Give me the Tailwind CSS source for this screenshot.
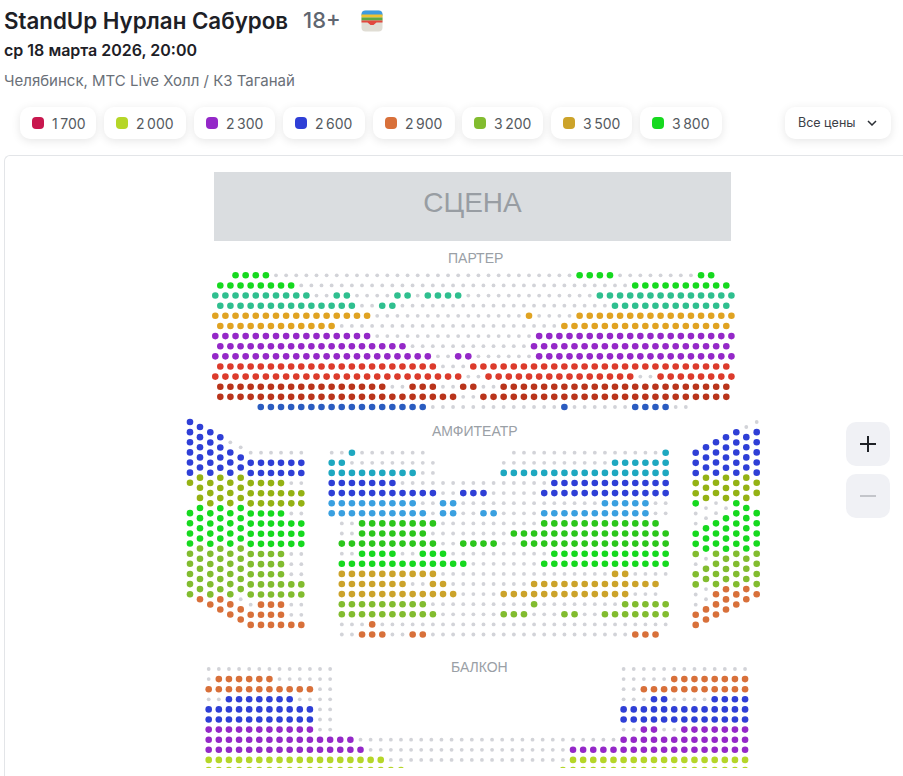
<!DOCTYPE html>
<html lang="ru">
<head>
    <meta charset="UTF-8">
    <title>StandUp Нурлан Сабуров</title>
    <meta name="viewport" content="width=device-width, initial-scale=1.0">
    <script src="https://cdn.jsdelivr.net/npm/@tailwindcss/browser@4"></script>
</head>
<body class="h-[776px] overflow-hidden bg-white font-['Inter',sans-serif]">

<header class="pl-1 pt-[7px]">
    <div class="flex items-center h-[27px]">
        <h1 class="text-[22.3px] font-semibold text-[#1d2026] leading-[27px]">StandUp Нурлан Сабуров</h1>
        <span class="ml-[15px] text-[22px] font-medium text-[#5f6670] leading-[27px]">18+</span>
        <svg class="ml-[20px]" width="22" height="22" viewBox="0 0 22 22">
            <rect x="0.5" y="0.5" width="21" height="21" rx="4" fill="#e0ddd4"/>
            <path d="M0.5 4.5a4 4 0 0 1 4-4h13a4 4 0 0 1 4 4v1h-21z" fill="#3d9be0"/>
            <rect x="0.5" y="4.5" width="21" height="3" fill="#f2c230"/>
            <rect x="0.5" y="7.5" width="21" height="3" fill="#5ea845"/>
            <path d="M0.5 10.5h21v2h-6l-3 2.500h-3l-3-2.500h-6z" fill="#e2483f"/>
        </svg>
    </div>
    <p class="mt-[6px] text-[16px] font-semibold text-[#1d2026] leading-[20px]">ср 18 марта 2026, 20:00</p>
    <p class="mt-[11px] text-[15px] text-[#6a7078] leading-[20px]">Челябинск, МТС Live Холл / КЗ Таганай</p>
</header>

<div class="flex items-center mt-[16px] pl-[20px] pr-3 h-[32px]">
    <div class="flex gap-2">
        <div class="flex items-center h-8 w-[76px] pl-3 rounded-[10px] bg-white shadow-[0_2px_10px_rgba(0,0,0,0.1)] text-[14px] text-[#555a60]"><i class="w-3 h-3 rounded-[4px] bg-[#c8174e] mr-[8px]"></i><span class="pt-px">1&#8201;700</span></div>
        <div class="flex items-center h-8 w-[82px] pl-3 rounded-[10px] bg-white shadow-[0_2px_10px_rgba(0,0,0,0.1)] text-[14px] text-[#555a60]"><i class="w-3 h-3 rounded-[4px] bg-[#b5d628] mr-[8px]"></i><span class="pt-px">2&#8201;000</span></div>
        <div class="flex items-center h-8 w-[81px] pl-3 rounded-[10px] bg-white shadow-[0_2px_10px_rgba(0,0,0,0.1)] text-[14px] text-[#555a60]"><i class="w-3 h-3 rounded-[4px] bg-[#9428c8] mr-[8px]"></i><span class="pt-px">2&#8201;300</span></div>
        <div class="flex items-center h-8 w-[82px] pl-3 rounded-[10px] bg-white shadow-[0_2px_10px_rgba(0,0,0,0.1)] text-[14px] text-[#555a60]"><i class="w-3 h-3 rounded-[4px] bg-[#2f3fd6] mr-[8px]"></i><span class="pt-px">2&#8201;600</span></div>
        <div class="flex items-center h-8 w-[82px] pl-3 rounded-[10px] bg-white shadow-[0_2px_10px_rgba(0,0,0,0.1)] text-[14px] text-[#555a60]"><i class="w-3 h-3 rounded-[4px] bg-[#d8703a] mr-[8px]"></i><span class="pt-px">2&#8201;900</span></div>
        <div class="flex items-center h-8 w-[81px] -ml-px pl-3 rounded-[10px] bg-white shadow-[0_2px_10px_rgba(0,0,0,0.1)] text-[14px] text-[#555a60]"><i class="w-3 h-3 rounded-[4px] bg-[#82bc2f] mr-[8px]"></i><span class="pt-px">3&#8201;200</span></div>
        <div class="flex items-center h-8 w-[81px] pl-3 rounded-[10px] bg-white shadow-[0_2px_10px_rgba(0,0,0,0.1)] text-[14px] text-[#555a60]"><i class="w-3 h-3 rounded-[4px] bg-[#cca32a] mr-[8px]"></i><span class="pt-px">3&#8201;500</span></div>
        <div class="flex items-center h-8 w-[82px] pl-3 rounded-[10px] bg-white shadow-[0_2px_10px_rgba(0,0,0,0.1)] text-[14px] text-[#555a60]"><i class="w-3 h-3 rounded-[4px] bg-[#16d91f] mr-[8px]"></i><span class="pt-px">3&#8201;800</span></div>
    </div>
    <button class="ml-auto flex items-center justify-between h-8 w-[106px] pl-[13px] pr-[14px] rounded-[10px] bg-white shadow-[0_2px_10px_rgba(0,0,0,0.1)] text-[12.5px] text-[#3b4046]">
        Все цены
        <svg width="10" height="6" viewBox="0 0 10 6" fill="none" stroke="#2b2f35" stroke-width="1.5"><path d="M1 1l4 4 4-4"/></svg>
    </button>
</div>

<!-- seat map, x/y of everything inside is page coords minus 5/156 -->
<main class="relative mt-4 ml-1 h-[621px] border-t border-l border-[#e3e5e8] rounded-tl-[6px]">
    <div class="absolute left-[209px] top-[16px] flex items-center justify-center w-[517px] h-[69px] pb-2 bg-[#dadde0] font-['Liberation_Sans',sans-serif] text-[28px] text-[#989da3]">СЦЕНА</div>
    <div class="absolute left-[443px] top-[94px] font-['Liberation_Sans',sans-serif] text-[14px] leading-[16px] text-[#9aa0a6]">ПАРТЕР</div>
    <div class="absolute left-[427px] top-[267px] font-['Liberation_Sans',sans-serif] text-[14px] leading-[16px] text-[#9aa0a6]">АМФИТЕАТР</div>
    <div class="absolute left-[446px] top-[503px] font-['Liberation_Sans',sans-serif] text-[14px] leading-[16px] text-[#9aa0a6]">БАЛКОН</div>

    <svg id="seats" class="absolute left-[-5px] top-[-156px]" width="898" height="768"></svg>

    <div class="absolute left-[841px] top-[266px] flex flex-col gap-2">
        <button class="flex items-center justify-center w-11 h-11 rounded-[10px] bg-[#f0f1f5]">
            <svg width="18" height="18" viewBox="0 0 18 18" stroke="#1e2126" stroke-width="2"><path d="M9 1v16M1 9h16"/></svg>
        </button>
        <button class="flex items-center justify-center w-11 h-11 rounded-[10px] bg-[#f0f1f5]">
            <svg width="18" height="18" viewBox="0 0 18 18" stroke="#c3c5ca" stroke-width="2"><path d="M1 9h16"/></svg>
        </button>
    </div>
</main>

<script>
    const colors = {
        G: "#16d91f", H: "#2cc61c", T: "#2fbf8f", O: "#e0a322", P: "#9428c8", R: "#dc3b2c", D: "#b9341b",
        N: "#2a5cc0", B: "#2f3fd6", V: "#95b214", L: "#82bc2f", A: "#d8703a", C: "#1ea8c0", S: "#3aa0e0",
        Y: "#cca32a", Z: "#b5d628"
    };
    const svg = document.getElementById("seats");

    function seat(x, y, code) {
        if (code === "_") return;
        const c = document.createElementNS("http://www.w3.org/2000/svg", "circle");
        c.setAttribute("cx", x);
        c.setAttribute("cy", y);
        c.setAttribute("r", code === "." ? 1.9 : 3.3);
        c.setAttribute("fill", code === "." ? "#d2d3d8" : colors[code]);
        svg.appendChild(c);
    }

    // "G4 .2" -> G G G G . .
    function expand(str) {
        let out = [];
        str.split(" ").forEach(t => {
            for (let n = 0; n < +t.slice(1); n++) out.push(t[0]);
        });
        return out;
    }

    function row(x, y, str) {
        expand(str).forEach((code, i) => seat(x + i * 10.12, y, code));
    }

    function col(x, y, str) {
        expand(str).forEach((code, i) => seat(x, y + i * 10.13, code));
    }

    // parter: even rows start at 215.3, odd ones at 220.3
    const parter = [
        [215.3, "_2 G4 .30 G4 .8 G2"],
        [220.3, "G8 .33 G10"],
        [215.3, "T10 .2 T2 .4 T2 .1 T4 .13 T14"],
        [220.3, "T14 .2 T2 .21 T12"],
        [215.3, "O16 .15 O1 .4 O16"],
        [220.3, "O12 .22 O17"],
        [215.3, "P16 .16 P20"],
        [220.3, "P19 .12 P20"],
        [215.3, "P22 .2 P2 .6 P20"],
        [220.3, "R22 .3 R26"],
        [215.3, "R25 .2 R15 .2 R8"],
        [220.3, "D17 .2 D3 .2 D2 .2 D23"],
        [220.3, "D24 .2 D25"],
        [220.3, "_4 N17 .13 N1 .6 N4 .2"]
    ];
    parter.forEach((r, i) => row(r[0], 275.3 + i * 10.13, r[1]));

    // amphitheatre left wing, by column
    [
        [190, 422, "B6 V1 _2 G4 L5"],
        [200, 427, "B5 V3 G4 L5 A1"],
        [210.3, 432.3, "B5 V3 G4 L5 A1"],
        [220.3, 437.3, "B4 V3 G4 L5 A2"],
        [230.3, 442.3, ".1 B3 V3 G4 L5 A2"],
        [240.7, 447.3, ".1 B2 V3 G4 L5 .1 A2"],
        [250.7, 452.7, ".1 B2 V3 G4 L5 .1 A2"],
        [261, 452.7, ".1 B2 V3 G4 L5 A3"],
        [271, 452.7, ".1 B2 V3 G4 L5 A3"],
        [281, 452.7, ".1 B2 V3 G4 L5 A3"],
        [291.3, 452.7, ".1 B2 .1 V2 .1 G3 .3 L2 .2 A1"],
        [301.3, 452.7, ".1 B2 .1 V2 .1 G3 .3 L2 .2 A1"]
    ].forEach(c => col(c[0], c[1], c[2]));

    // amphitheatre right wing
    [
        [695.7, 452.7, "B3 V2 G1 .2 G2 L1 .1 L2 .2 A2"],
        [706, 447.3, "B3 V3 .2 G3 .1 L2 .2 A2"],
        [716, 442.3, "B4 V2 .2 G3 L4 A3"],
        [726, 437.3, "B4 V3 .1 G4 L3 A3"],
        [736.3, 432.3, "B5 V2 G5 L4 A2"],
        [746.3, 427, ".1 B4 V3 G5 L3 A2"],
        [756.7, 422, ".1 B5 V2 _1 G4 L4 A1"]
    ].forEach(c => col(c[0], c[1], c[2]));

    // amphitheatre centre
    [
        ".2 C1 .7 _8 .15 C1",
        "C2 .9 _6 .11 C6",
        "C9 .2 _6 C17",
        "B7 .15 B12",
        "B11 .2 B3 .5 B13",
        "S9 .2 S2 .14 S5 .2",
        "S10 .1 S2 .2 S2 .4 S11 .2",
        "_1 .2 H8 .10 H12 _1",
        "_1 .2 H7 .8 H16",
        "_1 H10 .2 H4 .2 H15",
        "_1 .2 G4 .2 G3 .10 G12",
        "_1 G13 .7 G13",
        "_1 Y10 .17 Y2 .4",
        "_1 Y7 .2 Y2 .8 Y13 _1",
        "_1 Y12 .4 Y13 .3 _1",
        "_1 L9 .10 L1 .8 L5",
        "_1 L10 .6 L3 .3 L2 .2 L7",
        "_1 .3 A1 .29",
        "_1 .2 A3 .2 A2 .20 A3 _1"
    ].forEach((r, i) => row(331.7, 452.7 + i * 10.1, r));

    // balcony
    [
        ".13 _28 .13",
        ".1 A6 .6 _28 .5 A8",
        "A11 .2 _28 .2 A11",
        ".2 B7 .4 _28 .3 B2 .4 B4",
        "B11 .2 _28 B13",
        "B11 .2 _28 B13",
        "P11 .2 _28 .2 P2 .2 P7",
        "P15 .26 P13",
        "P16 .20 P18",
        "Z18 .18 Z18",
        "Z20 .15 Z19"
    ].forEach((r, i) => row(208.7, 669 + i * 10.1, r));
</script>

</body>
</html>
